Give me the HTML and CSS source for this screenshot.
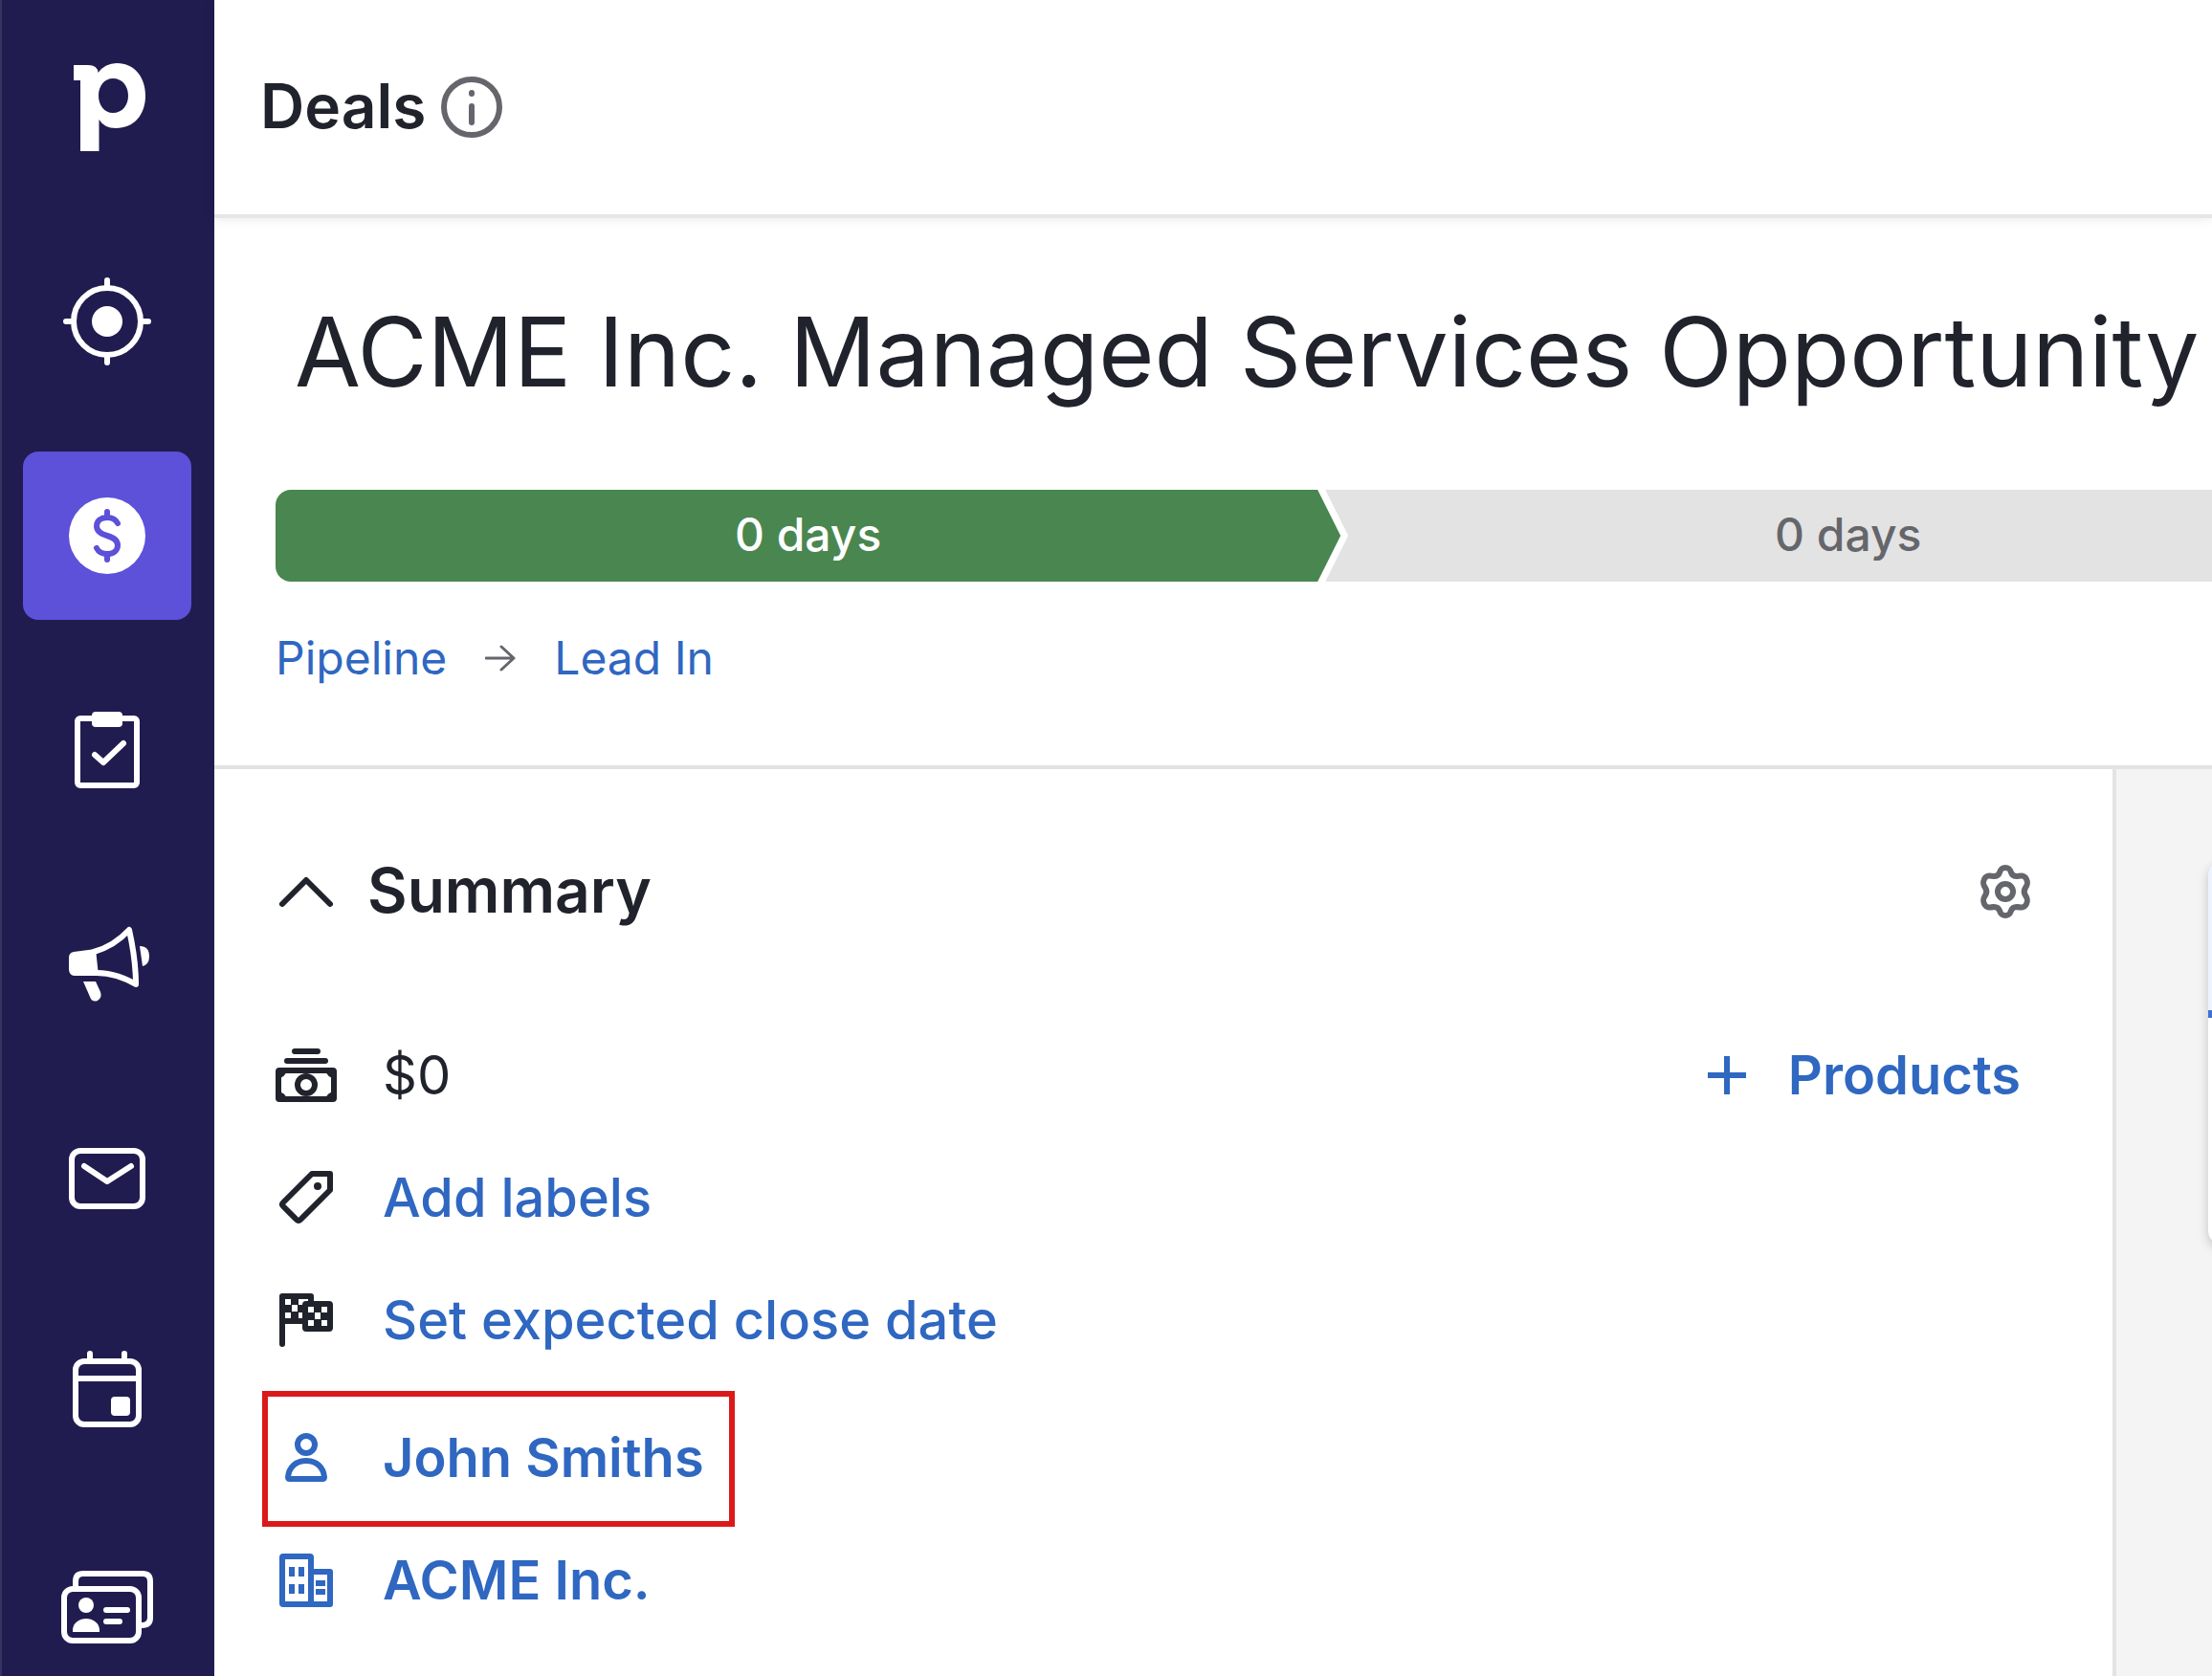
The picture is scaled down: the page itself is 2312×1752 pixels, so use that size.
FILE: index.html
```html
<!DOCTYPE html>
<html lang="en">
<head>
    <meta charset="UTF-8">
    <meta name="viewport" content="width=device-width, initial-scale=1.0">
    <title>Deals</title>
    <link rel="stylesheet" href="styles.css">
</head>
<body>
    <nav class="sidebar" aria-label="Main">
        <a class="nav-item" href="#" aria-label="Home">
            <svg class="nav-icon" viewBox="0 0 96 96">
                <path class="solid" fill-rule="evenodd" d="M13 4H28Q38 4 38.500 12Q46 2 58 2C77 2 88 17 88 36C88 56 76 70 57 70Q45 70 39.500 61V94H20V20H13ZM54 18C45 18 39 26 39 36C39 46 45 54 54 54C64 54 70 46 70 36C70 26 64 18 54 18Z"/>
            </svg>
        </a>
        <a class="nav-item" href="#" aria-label="Leads">
            <svg class="nav-icon" viewBox="0 0 96 96">
                <circle cx="48" cy="48" r="35"/>
                <circle class="solid" cx="48" cy="48" r="16"/>
                <path d="M48 5V12M48 84V91M5 48H12M84 48H91"/>
            </svg>
        </a>
        <a class="nav-item active" href="#" aria-label="Deals">
            <svg class="nav-icon" viewBox="0 0 96 96">
                <circle class="solid" cx="48" cy="48" r="40"/>
                <path class="cutout" d="M59 35C57 31 53 29 48 29C41 29 37 33 37 38C37 43 41 46 48 48C55 50 59 53 59 58C59 63 55 67 48 67C43 67 39 65 37 61M48 23V28M48 68V73"/>
            </svg>
        </a>
        <a class="nav-item" href="#" aria-label="Projects">
            <svg class="nav-icon" viewBox="0 0 96 96">
                <rect x="17" y="15" width="62" height="70" rx="3"/>
                <rect class="solid" x="32" y="8" width="32" height="16" rx="4"/>
                <path d="M35 53L44 61L65 41"/>
            </svg>
        </a>
        <a class="nav-item" href="#" aria-label="Campaigns">
            <svg class="nav-icon" viewBox="0 0 96 96">
                <path class="solid" d="M8 41Q8 36 13 35L36 32L39 60H14Q9 60 8 54Z"/>
                <path d="M34 35C48 31 60 24 71 12C75 30 78 48 78 69C66 62 54 57 37 57"/>
                <path class="solid" d="M82 29Q92 29 92 40Q92 48 85 50Z"/>
                <path class="solid" d="M23 66H36L41 77Q43 83 38 86Q32 88 30 82Z"/>
            </svg>
        </a>
        <a class="nav-item" href="#" aria-label="Mail">
            <svg class="nav-icon" viewBox="0 0 96 96">
                <rect x="11" y="19" width="74" height="58" rx="9"/>
                <path d="M24 35L48 51L73 35"/>
            </svg>
        </a>
        <a class="nav-item" href="#" aria-label="Activities">
            <svg class="nav-icon" viewBox="0 0 96 96">
                <rect x="15" y="15" width="66" height="66" rx="9"/>
                <path d="M15 33H81M30 7V14M66 7V14"/>
                <rect class="solid" x="52" y="52" width="20" height="20" rx="4"/>
            </svg>
        </a>
        <a class="nav-item" href="#" aria-label="Contacts">
            <svg class="nav-icon" viewBox="0 0 96 96">
                <path stroke-linecap="butt" d="M15 28V21Q15 13 23 13H85Q93 13 93 21V59Q93 67 84 67H82"/>
                <rect x="3" y="29" width="78" height="54" rx="9"/>
                <circle class="solid" cx="26" cy="46" r="8"/>
                <path class="solid" d="M12 74V71C13 64 19 60 26 60C33 60 39 64 40 71V74Z"/>
                <path d="M47 51H69M47 63H61"/>
            </svg>
        </a>
    </nav>

    <div class="page">
        <header class="topbar">
            <h1 class="topbar-title">Deals</h1>
            <button class="icon-button" type="button" aria-label="About deals">
                <svg class="icon icon-grey" viewBox="0 0 64 64">
                    <circle cx="32" cy="32" r="29"/>
                    <path d="M32 31V48M32 17V18"/>
                </svg>
            </button>
        </header>

        <section class="deal-head">
            <h2 class="deal-title">ACME Inc. Managed Services Opportunity</h2>
            <div class="stages">
                <button class="stage stage-done" type="button">0 days</button>
                <button class="stage stage-next" type="button">0 days</button>
            </div>
            <div class="breadcrumb">
                <a href="#">Pipeline</a>
                <svg class="arrow" viewBox="0 0 32 32">
                    <path d="M1 16H29M17 4L30 16L17 28"/>
                </svg>
                <a href="#">Lead In</a>
            </div>
        </section>

        <div class="columns">
            <main class="summary">
                <div class="summary-head">
                    <button class="icon-button" type="button" aria-label="Collapse summary">
                        <svg class="icon" viewBox="0 0 64 64">
                            <path d="M7 45L32 20L57 45"/>
                        </svg>
                    </button>
                    <h3 class="summary-title">Summary</h3>
                    <button class="icon-button" type="button" aria-label="Summary settings">
                        <svg class="icon icon-grey" viewBox="0 0 64 64">
                            <path d="M32 7C36 7 37 9 38 12C39 15 41 16 44 16C49 15 52 15 54 19C56 23 55 25 53 28C51 31 51 33 53 36C55 39 56 41 54 45C52 49 49 49 44 48C41 48 39 49 38 52C37 55 36 57 32 57C28 57 27 55 26 52C25 49 23 48 20 48C15 49 12 49 10 45C8 41 9 39 11 36C13 33 13 31 11 28C9 25 8 23 10 19C12 15 15 15 20 16C23 16 25 15 26 12C27 9 28 7 32 7Z"/>
                            <circle cx="32" cy="32" r="8"/>
                        </svg>
                    </button>
                </div>

                <ul class="details">
                    <li class="detail">
                        <svg class="icon" viewBox="0 0 64 64">
                            <path d="M20 7H44M12 17H52"/>
                            <rect x="3" y="27" width="58" height="30" rx="1"/>
                            <circle cx="32" cy="42" r="9"/>
                            <path class="solid" d="M3 27H12Q10 34 3 35ZM61 27H52Q54 34 61 35ZM3 57H12Q10 50 3 49ZM61 57H52Q54 50 61 49Z"/>
                        </svg>
                        <span>$0</span>
                        <button class="products" type="button">
                            <svg class="plus" viewBox="0 0 40 40">
                                <path d="M20 0V40M0 20H40"/>
                            </svg>
                            Products
                        </button>
                    </li>
                    <li class="detail">
                        <svg class="icon" viewBox="0 0 64 64">
                            <path d="M38 7H57V24L26 55Q24 57 22 55L8 41Q6 39 8 37Z"/>
                            <circle class="solid" cx="44" cy="20" r="4"/>
                        </svg>
                        <a class="add-link" href="#">Add labels</a>
                    </li>
                    <li class="detail">
                        <svg class="icon" viewBox="0 0 64 64">
                            <path d="M7 57V7H37V33H7"/>
                            <path class="solid" d="M16 10H24V16H16ZM10 16H17V24H10ZM23 16H30V24H23ZM16 23H24V30H16Z"/>
                            <rect class="flag-front" x="31" y="15" width="26" height="26" rx="1"/>
                            <path class="solid" d="M40 18H48V24H40ZM34 24H41V32H34ZM47 24H54V32H47ZM40 31H48V38H40Z"/>
                        </svg>
                        <a class="add-link" href="#">Set expected close date</a>
                    </li>
                </ul>

                <ul class="details related">
                    <li class="detail highlighted">
                        <svg class="icon icon-blue" viewBox="0 0 64 64">
                            <circle cx="32" cy="18" r="9"/>
                            <path d="M13 52C14 42 21 35 32 35C43 35 50 42 51 52Q51 54 49 54H15Q13 54 13 52Z"/>
                        </svg>
                        <a class="strong" href="#">John Smiths</a>
                    </li>
                    <li class="detail">
                        <svg class="icon icon-blue" viewBox="0 0 64 64">
                            <rect x="7" y="7" width="30" height="50" rx="1"/>
                            <path d="M37 23H57V57H37"/>
                            <path stroke-linecap="butt" d="M17 18V28M27 18V28M17 36V46M27 36V46"/>
                            <path stroke-linecap="butt" d="M42 35H52M42 44H52"/>
                        </svg>
                        <a class="strong" href="#">ACME Inc.</a>
                    </li>
                </ul>
            </main>

            <aside class="feed">
                <div class="feed-card">
                    <div class="feed-tab"></div>
                </div>
            </aside>
        </div>
    </div>
</body>
</html>
```
FILE: styles.css
```css
* {
    box-sizing: border-box;
}

body {
    margin: 0;
    display: flex;
    height: 100vh;
    overflow: hidden;
    font-family: Inter, sans-serif;
    font-size: 56px;
    color: #21232c;
    background: #fff;
}

h1, h2, h3, ul {
    margin: 0;
    padding: 0;
}

a {
    color: #2f67c1;
    text-decoration: none;
}

button {
    padding: 0;
    border: none;
    background: none;
    font: inherit;
    color: inherit;
    cursor: pointer;
}

svg {
    display: block;
    flex: none;
    fill: none;
    stroke: currentColor;
    stroke-width: 6px;
    stroke-linecap: round;
    stroke-linejoin: round;
}

.solid {
    fill: currentColor;
    stroke: none;
}

/* sidebar */
.sidebar {
    flex: none;
    width: 224px;
    padding: 24px 0 24px 22px;
    border-left: 2px solid #37325f;
    background: #211c4f;
    display: flex;
    flex-direction: column;
    gap: 48px;
}

.nav-item {
    flex: none;
    width: 176px;
    height: 176px;
    border-radius: 16px;
    display: flex;
    align-items: center;
    justify-content: center;
    color: #fff;
}

.nav-item.active {
    background: #5d50d9;
}

.nav-icon {
    width: 96px;
    height: 96px;
}

.cutout {
    stroke: #5d50d9;
}

/* page */
.page {
    flex: 1;
    min-width: 0;
    display: flex;
    flex-direction: column;
}

.topbar {
    flex: none;
    height: 224px;
    padding: 0 48px;
    display: flex;
    align-items: center;
    gap: 16px;
    box-shadow: 0 4px 0 #e6e6e6, 0 4px 12px rgba(0, 0, 0, 0.1);
}

.topbar-title,
.summary-title {
    padding-bottom: 2px;
    font-size: 64px;
    font-weight: 600;
    line-height: 80px;
}

.icon {
    width: 64px;
    height: 64px;
}

.icon-grey {
    color: #65666c;
}

.icon-blue {
    color: #2f67c1;
}

.deal-head {
    padding: 80px 0 80px 64px;
    border-bottom: 4px solid #e3e3e3;
}

.deal-title {
    padding-left: 20px;
    margin-bottom: 80px;
    font-size: 100px;
    font-weight: 400;
    line-height: 128px;
    white-space: nowrap;
}

.stages {
    display: flex;
    height: 96px;
    overflow: hidden;
    border-radius: 16px 0 0 16px;
}

.stage {
    padding-bottom: 4px;
    font-size: 48px;
    font-weight: 500;
}

.stage-done {
    flex: 0 0 55%;
    background: #4a864f;
    color: #fff;
    clip-path: polygon(0 0, calc(100% - 24px) 0, 100% 50%, calc(100% - 24px) 100%, 0 100%);
}

.stage-next {
    flex: 0 0 54%;
    margin-left: -16px;
    background: #e3e3e3;
    color: #65666c;
    clip-path: polygon(0 0, 100% 0, 100% 100%, 0 100%, 24px 50%);
}

.breadcrumb {
    display: flex;
    align-items: center;
    gap: 40px;
    margin-top: 48px;
    font-size: 48px;
    line-height: 64px;
}

.arrow {
    width: 32px;
    height: 32px;
    color: #65666c;
    stroke-width: 3px;
}

.columns {
    flex: 1;
    display: flex;
}

.summary {
    flex: 1;
    padding: 80px 80px 0 64px;
    border-right: 4px solid #e3e3e3;
}

.summary-head {
    display: flex;
    align-items: center;
    gap: 32px;
    height: 96px;
    margin-bottom: 80px;
}

.summary-title {
    flex: 1;
}

.details {
    list-style: none;
}

.related {
    margin-top: 16px;
}

.detail {
    display: flex;
    align-items: center;
    gap: 48px;
    height: 128px;
}

.add-link {
    font-weight: 500;
}

.strong {
    font-weight: 600;
}

.flag-front {
    fill: #fff;
}

.products {
    display: flex;
    align-items: center;
    gap: 44px;
    margin-left: auto;
    padding: 0 16px;
    font-weight: 600;
    color: #2f67c1;
}

.plus {
    width: 40px;
    height: 40px;
    stroke-linecap: butt;
}

/* red frame around the linked person */
.highlighted {
    position: relative;
    width: fit-content;
}

.highlighted::after {
    content: "";
    position: absolute;
    top: -6px;
    bottom: -8px;
    left: -14px;
    right: -32px;
    border: 6px solid #db1a1a;
}

.feed {
    flex: none;
    width: 100px;
    padding: 96px 0 0 96px;
    background: #f4f4f4;
    overflow: hidden;
}

.feed-card {
    width: 800px;
    height: 402px;
    border-radius: 16px;
    background: #fff;
    box-shadow: 0 4px 12px rgba(0, 0, 0, 0.2);
}

.feed-tab {
    height: 164px;
    border-radius: 16px 0 0 0;
    border-bottom: 8px solid #4070d0;
    background: #edf4ff;
}
```
